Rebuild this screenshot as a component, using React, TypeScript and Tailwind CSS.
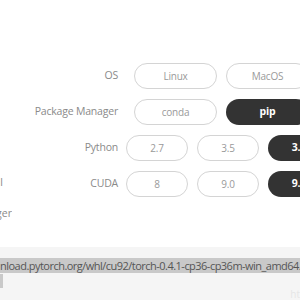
import React from "react";

function Btn({ label, active, w }: { label: string; active?: boolean; w: string }) {
  return active ? (
    <div className={`${w} h-[26px] shrink-0 rounded-full bg-[#333333] flex items-center justify-center text-white font-bold text-[10.5px]`}>
      {label}
    </div>
  ) : (
    <div className={`${w} h-[26px] shrink-0 rounded-full border-[1.5px] border-[#d4d4d4] flex items-center justify-center text-[#9a9a9a] text-[10px]`}>
      {label}
    </div>
  );
}

export default function App() {
  return (
    <div
      className="w-[300px] h-[300px] overflow-hidden bg-white flex flex-col"
      style={{ fontFamily: '"Open Sans", "Liberation Sans", sans-serif' }}
    >
      <div className="h-[247px] shrink-0 flex">
        <div className="w-[12px] shrink-0 flex flex-col text-[10.5px] text-[#8a8a8a] overflow-hidden">
          <div className="h-[175px] shrink-0" />
          <div className="w-[3px] flex justify-end whitespace-nowrap leading-[14px] overflow-hidden">al</div>
          <div className="h-[17px] shrink-0" />
          <div className="flex justify-end whitespace-nowrap leading-[14px]">Manager</div>
        </div>
        <div className="flex-1 flex flex-col pt-[63px] gap-[10px] text-[10.5px] tracking-[-0.2px] text-[#8a8a8a] overflow-hidden">
          <div className="flex items-center h-[26px]">
            <div className="w-[106px] shrink-0 text-right">OS</div>
            <div className="flex gap-[9px] ml-[16px]">
              <Btn label="Linux" w="w-[83px]" />
              <Btn label="MacOS" w="w-[83px]" />
            </div>
          </div>
          <div className="flex items-center h-[26px]">
            <div className="w-[106px] shrink-0 text-right whitespace-nowrap">Package Manager</div>
            <div className="flex gap-[9px] ml-[16px]">
              <Btn label="conda" w="w-[83px]" />
              <Btn label="pip" active w="w-[83px]" />
            </div>
          </div>
          <div className="flex items-center h-[26px]">
            <div className="w-[106px] shrink-0 text-right">Python</div>
            <div className="flex gap-[9px] ml-[8px]">
              <Btn label="2.7" w="w-[62px]" />
              <Btn label="3.5" w="w-[62px]" />
              <Btn label="3.6" active w="w-[62px]" />
            </div>
          </div>
          <div className="flex items-center h-[26px]">
            <div className="w-[106px] shrink-0 text-right">CUDA</div>
            <div className="flex gap-[9px] ml-[8px]">
              <Btn label="8" w="w-[62px]" />
              <Btn label="9.0" w="w-[62px]" />
              <Btn label="9.2" active w="w-[62px]" />
            </div>
          </div>
        </div>
      </div>
      <div className="flex-1 bg-[#f5f5f5] flex flex-col pt-[10px] overflow-hidden relative">
        <div className="whitespace-nowrap text-[11px] tracking-[-0.52px] leading-[17px] text-[#555555]">
          <span className="bg-[#c9c9c9]">nload.pytorch.org/whl/cu92/torch-0.4.1-cp36-cp36m-win_amd64.whl</span>
        </div>
        <div className="w-[3px] h-[14px] bg-[#c9c9c9]" />
        <div className="absolute right-0 bottom-0 text-[10px] text-[#e6e6e6] leading-[12px]">ht</div>
      </div>
    </div>
  );
}
